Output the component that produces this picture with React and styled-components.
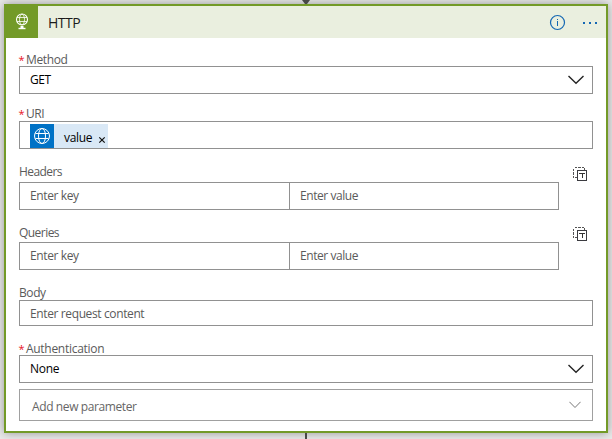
import React from "react";
import styled, { createGlobalStyle } from "styled-components";

const GlobalStyle = createGlobalStyle`
  * { box-sizing: border-box; }
  body {
    margin: 0;
    background: #e9e9e9;
    font-family: "Open Sans", "Noto Sans", sans-serif;
    font-size: 12px;
    color: #000;
  }
`;

const Canvas = styled.div`
  position: relative;
  width: 612px;
  height: 439px;
  padding: 4px;
  overflow: hidden;
`;

const ArrowHead = styled.svg`
  position: absolute;
  left: 301px;
  top: 0;
`;

const Connector = styled.div`
  position: absolute;
  left: 305px;
  top: 433px;
  width: 2px;
  height: 6px;
  background: #484848;
`;

const Card = styled.section`
  width: 604px;
  height: 429px;
  border: 2px solid #739a28;
  background: #fff;
  box-shadow: 0 0 9px rgba(0, 0, 0, 0.36);
`;

const Header = styled.header`
  display: flex;
  align-items: center;
  height: 32px;
  background: #eaefdf;
`;

const Brand = styled.div`
  display: flex;
  width: 32px;
  height: 32px;
  background: #739a28;
`;

const Title = styled.h1`
  flex: 1;
  margin: 0 0 0 10px;
  font-size: 14px;
  font-weight: 400;
  line-height: 20px;
  padding-top: 2px;
  letter-spacing: -0.5px;
  color: #1b1b1b;
`;

const HeaderActions = styled.svg`
  display: block;
`;

const Form = styled.div`
  padding: 13px 13px 0;
`;

const Field = styled.div`
  margin-bottom: ${(p) => p.$after}px;
`;

const Label = styled.label`
  display: flex;
  height: ${(p) => p.$height}px;
  line-height: 18px;
  letter-spacing: ${(p) => p.$tracking}px;
  white-space: nowrap;
  color: #5a5a5a;
`;

const Star = styled.span`
  width: 7px;
  font-size: 11px;
  letter-spacing: 0;
  text-indent: -0.5px;
  color: #e81123;
`;

const Box = styled.div`
  display: flex;
  align-items: center;
  justify-content: space-between;
  width: 574px;
  height: ${(p) => p.$height || 28}px;
  padding: 0 ${(p) => p.$end || 8}px 0 ${(p) => p.$inset || 10}px;
  border: 1px solid ${(p) => p.$border || "#919191"};
  background: #fff;
  color: ${(p) => p.$color || "#000"};
  letter-spacing: ${(p) => p.$tracking || 0}px;
  white-space: nowrap;
`;

const Text = styled.span`
  line-height: 18px;
  padding-top: ${(p) => p.$drop || 0}px;
`;

const PairRow = styled.div`
  display: flex;
  justify-content: space-between;
  width: 570px;
`;

const Pair = styled.div`
  display: grid;
  grid-template-columns: 269px 269px;
  width: 540px;
  height: 28px;
  border: 1px solid #919191;
`;

const Cell = styled.div`
  padding-left: 10px;
  border-left: ${(p) => (p.$second ? "1px solid #919191" : "0")};
  line-height: 26px;
  letter-spacing: ${(p) => p.$tracking}px;
  color: #5a5a5a;
`;

const ModeButton = styled.svg`
  display: block;
  margin-top: -15px;
  margin-right: 2px;
`;

const Token = styled.div`
  display: flex;
  align-items: center;
  align-self: flex-start;
  width: 78px;
  height: 24px;
  margin-top: 2px;
  background: #d9e8f6;
`;

const TokenName = styled.span`
  width: 28px;
  margin: 2px 6px 0 10px;
  letter-spacing: -0.3px;
`;

const TokenClose = styled.svg`
  display: block;
  margin-top: 7px;
`;

const Chevron = ({ small }) =>
  small ? (
    <svg width="12" height="8" viewBox="0 0 12 8">
      <path d="M0.4 0.8 6 6.5 11.6 0.8" fill="none" stroke="#777" strokeWidth="1" />
    </svg>
  ) : (
    <svg width="16" height="10" viewBox="0 0 16 10">
      <path d="M0.5 1 8 8.3 15.5 1" fill="none" stroke="#252525" strokeWidth="1.4" />
    </svg>
  );

const GlobeStand = () => (
  <svg width="32" height="32" viewBox="0 0 32 32" fill="none" stroke="#fff" strokeWidth="0.8">
    <circle cx="16" cy="13.5" r="5.5" strokeWidth="1.1" />
    <ellipse cx="16" cy="13.5" rx="2.5" ry="5.3" />
    <path d="M11 11.5h10M11 15.5h10" />
    <path d="M14.5 20h3v2h-3z" fill="#fff" stroke="none" />
    <path d="M12.5 22.5h7" strokeWidth="1.4" />
  </svg>
);

const TokenGlobe = () => (
  <svg width="24" height="24" viewBox="0 0 24 24" fill="none" stroke="#fff" strokeWidth="1">
    <path d="M0 0h24v24H0z" fill="#0072c6" stroke="none" />
    <circle cx="12" cy="12" r="7.5" />
    <ellipse cx="12" cy="12" rx="3.5" ry="7.5" />
    <path d="M5.4 9.5h13.2M5.4 14.5h13.2" />
  </svg>
);

const TextMode = () => (
  <ModeButton width="14" height="14" viewBox="0 0 14 14" fill="none" shapeRendering="crispEdges">
    <path d="M2 .5h2M5 .5h3M9 .5h2M.5 2v2M.5 5v3M.5 9v2M11.5 1v2M2 10.5h2" stroke="#555" />
    <path d="M4.5 3.5h9v10h-9z" stroke="#3b3b40" />
    <path d="M6 6.5h6M9 7v4" stroke="#333" />
  </ModeButton>
);

const PairField = ({ name, height, tracking, after }) => (
  <Field $after={after}>
    <Label $height={height} $tracking={tracking}>{name}</Label>
    <PairRow>
      <Pair>
        <Cell $tracking={-0.39}>Enter key</Cell>
        <Cell $second $tracking={-0.44}>Enter value</Cell>
      </Pair>
      <TextMode />
    </PairRow>
  </Field>
);

export default function App() {
  return (
    <Canvas>
      <GlobalStyle />
      <Card>
        <Header>
          <Brand><GlobeStand /></Brand>
          <Title>HTTP</Title>
          <HeaderActions width="60" height="32" viewBox="0 0 60 32">
            <circle cx="11.5" cy="16.5" r="7" fill="none" stroke="#1467b3" strokeWidth="1.2" />
            <path d="M11 13h1v1h-1zM11 15h1v5h-1z" fill="#1467b3" />
            <path d="M37 16h2v2h-2zM43 16h2v2h-2zM49 16h2v2h-2z" fill="#1467b3" />
          </HeaderActions>
        </Header>
        <Form>
          <Field $after={11}>
            <Label $height={15} $tracking={-0.38}><Star>*</Star>Method</Label>
            <Box $tracking={-0.5}><Text>GET</Text><Chevron /></Box>
          </Field>
          <Field $after={14}>
            <Label $height={16} $tracking={-0.5}><Star>*</Star>URI</Label>
            <Box>
              <Token>
                <TokenGlobe />
                <TokenName>value</TokenName>
                <TokenClose width="8" height="8" viewBox="0 0 8 8">
                  <path d="M1.3 1.3 6.7 6.7M6.7 1.3 1.3 6.7" stroke="#111" strokeWidth="1.2" />
                </TokenClose>
              </Token>
            </Box>
          </Field>
          <PairField name="Headers" height={19} tracking={-0.58} after={14} />
          <PairField name="Queries" height={18} tracking={-0.54} after={14} />
          <Field $after={14}>
            <Label $height={16} $tracking={-0.4}>Body</Label>
            <Box $height={26} $color="#5a5a5a" $tracking={-0.38}><Text $drop={1}>Enter request content</Text></Box>
          </Field>
          <Field $after={6}>
            <Label $height={15} $tracking={-0.29}><Star>*</Star>Authentication</Label>
            <Box $tracking={-0.25}><Text>None</Text><Chevron /></Box>
          </Field>
          <Box $height={32} $inset={12} $end={11} $border="#a0a0a0" $color="#666" $tracking={-0.39}>
            <Text $drop={3}>Add new parameter</Text><Chevron small />
          </Box>
        </Form>
      </Card>
      <ArrowHead width="10" height="4" viewBox="0 0 10 4">
        <path d="M1 0h8L6 4H4z" fill="#484848" />
      </ArrowHead>
      <Connector />
    </Canvas>
  );
}
